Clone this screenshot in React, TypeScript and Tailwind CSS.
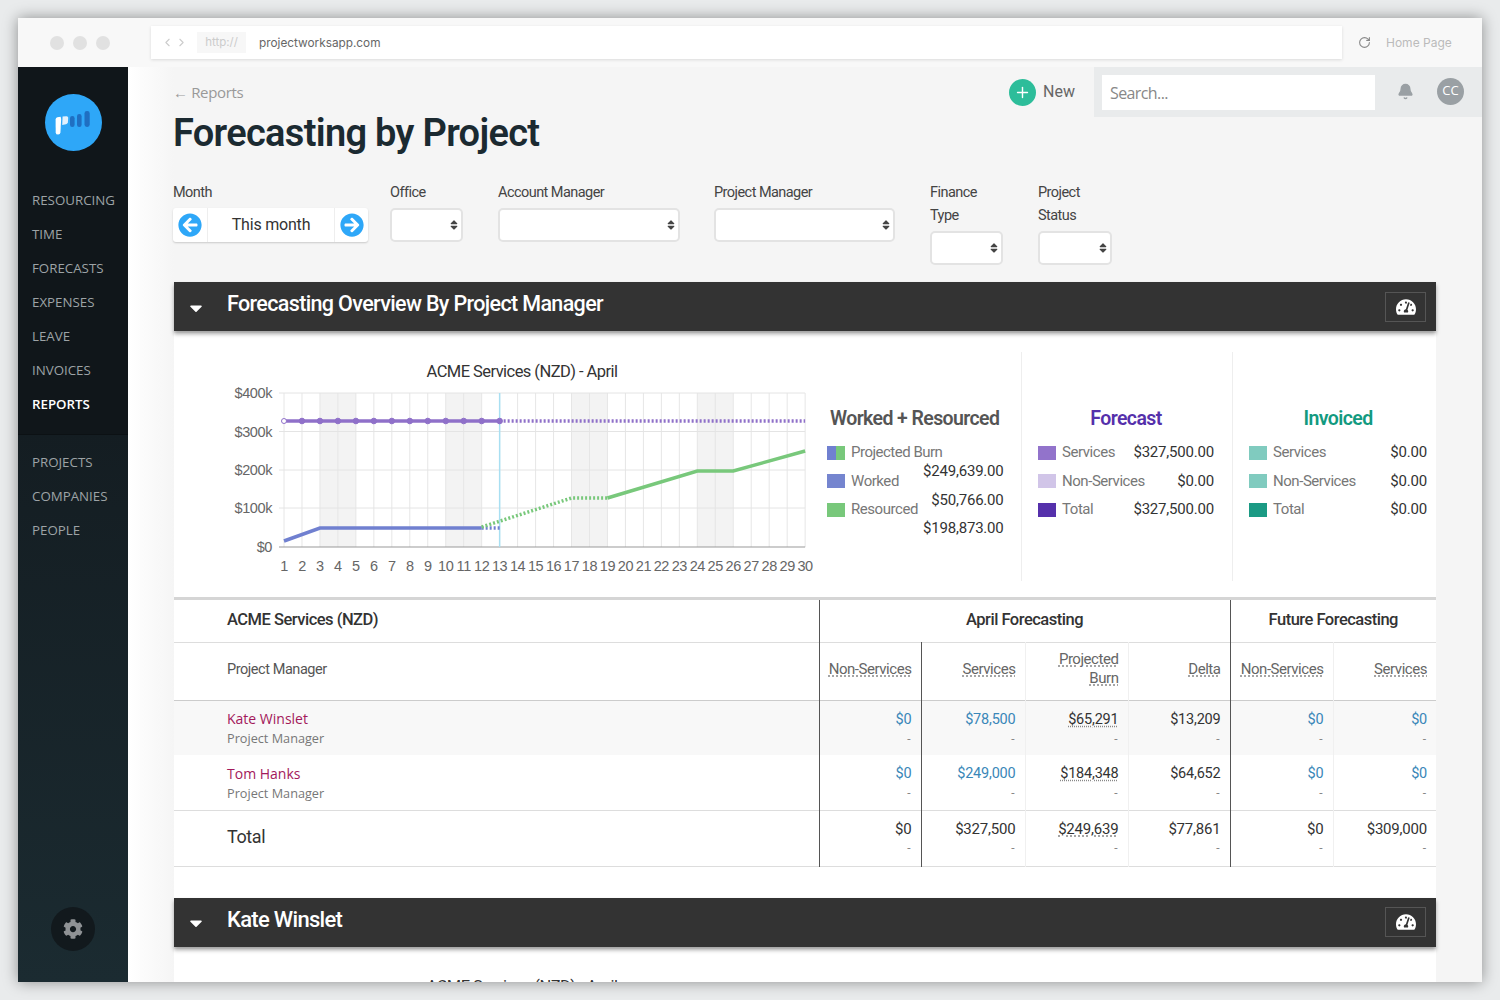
import { Bell, ChevronLeft, ChevronRight, Plus, RotateCw } from "lucide-react";
import { FaArrowCircleLeft, FaArrowCircleRight, FaCaretDown, FaCog, FaSort, FaTachometerAlt } from "react-icons/fa";

const mainNav = ["Resourcing", "Time", "Forecasts", "Expenses", "Leave", "Invoices", "Reports"];
const subNav = ["Projects", "Companies", "People"];

const dayX = (d: number) => 110 + (d - 1) * 17.97;
const days = Array.from({ length: 30 }, (_, i) => i + 1);
const grid = [
  { label: "$400k", y: 42 },
  { label: "$300k", y: 80.5 },
  { label: "$200k", y: 119 },
  { label: "$100k", y: 157 },
  { label: "$0", y: 196 },
];
const pts = (list: [number, number][]) => list.map(([d, y]) => `${dayX(d)},${y}`).join(" ");

const Chart = () => (
  <svg width="660" height="230" viewBox="0 0 660 230" className="shrink-0 block">
    <text x="348" y="26" textAnchor="middle" fontSize="16.5" fill="#333333" fontFamily="Roboto, sans-serif" letterSpacing="-0.55">
      ACME Services (NZD) - April
    </text>
    {[3, 10, 17, 24].map((d) => (
      <rect key={d} x={dayX(d)} y="42" width={dayX(5) - dayX(3)} height="154" fill="#f3f3f3" />
    ))}
    {days.map((d) => (
      <line key={d} x1={dayX(d)} x2={dayX(d)} y1="42" y2="196" stroke="#e6e6e6" />
    ))}
    {grid.map((g) => (
      <g key={g.label}>
        <line x1="105" x2={dayX(30)} y1={g.y} y2={g.y} stroke={g.y === 196 ? "#999999" : "#e4e4e4"} />
        <text x="98" y={g.y + 5} textAnchor="end" fontSize="14.5" fill="#666666" fontFamily="Liberation Sans, sans-serif" letterSpacing="-0.4">
          {g.label}
        </text>
      </g>
    ))}
    {days.map((d) => (
      <text key={d} x={dayX(d)} y="220" textAnchor="middle" fontSize="14.5" fill="#666666" fontFamily="Liberation Sans, sans-serif" letterSpacing="-0.4">
        {d}
      </text>
    ))}
    <line x1={dayX(13)} x2={dayX(13)} y1="42" y2="196" stroke="#a8dff2" strokeWidth="1.5" />
    <polyline points={pts([[1, 70], [13, 70]])} fill="none" stroke="#8f70c9" strokeWidth="3.5" />
    {days.slice(0, 13).map((d) => (
      <circle key={d} cx={dayX(d)} cy="70" r={d === 1 ? 2.5 : 2.8} fill={d === 1 ? "#ffffff" : "#8f70c9"} stroke="#8f70c9" strokeWidth="1" />
    ))}
    <polyline points={pts([[13, 70], [30, 70]])} fill="none" stroke="#8f70c9" strokeWidth="3.5" strokeDasharray="2 2" />
    <polyline points={pts([[1, 190], [3, 177], [12, 177]])} fill="none" stroke="#7080d0" strokeWidth="3.5" />
    <polyline points={pts([[12, 177], [13, 177]])} fill="none" stroke="#7080d0" strokeWidth="3.5" strokeDasharray="2 2" />
    <polyline points={pts([[12, 176], [17, 147], [19, 147]])} fill="none" stroke="#78c87b" strokeWidth="3.5" strokeDasharray="2 2" />
    <polyline points={pts([[19, 147], [24, 120], [26, 120], [30, 100]])} fill="none" stroke="#78c87b" strokeWidth="3.5" />
  </svg>
);

const Select = ({ width }: { width: string }) => (
  <div className={`${width} h-[34px] bg-white border-2 border-[#e3e3e3] rounded-[5px] flex items-center justify-end pr-[1px]`}>
    <FaSort size={12} className="text-[#444]" />
  </div>
);

const Filter = ({ label, width, select }: { label: string; width: string; select: string }) => (
  <div className={`${width} shrink-0`}>
    <div className={`${select} text-[14.5px] leading-[23px] text-[#444] tracking-[-0.55px] mb-[4px]`}>{label}</div>
    <Select width={select} />
  </div>
);

const SectionBar = ({ title, size }: { title: string; size: string }) => (
  <div className="h-[49px] bg-[#333333] flex items-center shadow-[0_3px_4px_rgba(0,0,0,0.35)] relative">
    <FaCaretDown size={20} className="text-white ml-[12px] mr-[21px] mt-[2px]" />
    <span className={`${size} text-white font-medium -mt-[5px]`}>{title}</span>
    <div className="ml-auto mr-[10px] w-[41px] h-[30px] border border-[#555] flex items-center justify-center">
      <FaTachometerAlt size={20} className="text-white" />
    </div>
  </div>
);

const LegendSwatch = ({ color }: { color: string }) => <span className="w-[18px] h-[14px] shrink-0 mt-[1px]" style={{ background: color }} />;

const LegendRow = ({ color, label, value }: { color: string; label: string; value: string }) => (
  <div className="h-[28.5px] flex items-center">
    <LegendSwatch color={color} />
    <span className="ml-[6px] text-[15px] text-[#777] tracking-[-0.45px]">{label}</span>
    <span className="ml-auto text-[15px] text-[#333] tracking-[-0.2px]">{value}</span>
  </div>
);

const Num = ({ value, blue, dotted, size = "text-[15px]" }: { value: string; blue?: boolean; dotted?: boolean; size?: string }) => (
  <div className="text-right">
    <div className={`${size} leading-[20px] tracking-[-0.2px] ${blue ? "text-[#3a87b8]" : "text-[#333]"} ${dotted ? "underline decoration-dotted decoration-[#888] underline-offset-2" : ""}`}>
      {value}
    </div>
    <div className="text-[12px] leading-[18px] text-[#888] pr-[1px]">-</div>
  </div>
);

const people = [
  { name: "Kate Winslet", cells: ["$0", "$78,500", "$65,291", "$13,209", "$0", "$0"], bg: "bg-[#f8f8f8]", h: "h-[55px]" },
  { name: "Tom Hanks", cells: ["$0", "$249,000", "$184,348", "$64,652", "$0", "$0"], bg: "bg-white", h: "h-[55px]" },
];
const totals = ["$0", "$327,500", "$249,639", "$77,861", "$0", "$309,000"];
const headCols = ["Non-Services", "Services", "Projected Burn", "Delta", "Non-Services", "Services"];
// border on each cell's left: dark where a block starts
const cellBorder = ["border-l border-l-[#555]", "border-l border-l-[#555]", "border-l border-l-[#f0f0f0]", "border-l border-l-[#f0f0f0]", "border-l border-l-[#555]", "border-l border-l-[#f0f0f0]"];

const ForecastTable = () => (
  <table className="w-full table-fixed border-collapse bg-white">
    <colgroup>
      <col className="w-[645px]" />
      <col className="w-[102px]" />
      <col className="w-[104px]" />
      <col className="w-[103px]" />
      <col className="w-[102px]" />
      <col className="w-[103px]" />
      <col className="w-[103px]" />
    </colgroup>
    <thead>
      <tr className="h-[42px] border-b border-[#ddd]">
        <th className="text-left pl-[53px] text-[16.5px] font-medium text-[#333] tracking-[-0.5px]">ACME Services (NZD)</th>
        <th colSpan={4} className="border-l border-l-[#555] text-[16.5px] font-medium text-[#333] tracking-[-0.5px]">April Forecasting</th>
        <th colSpan={2} className="border-l border-l-[#555] text-[16.5px] font-medium text-[#333] tracking-[-0.5px]">Future Forecasting</th>
      </tr>
      <tr className="h-[58px] border-b border-[#ccc]">
        <th className="text-left pl-[53px] pb-[2px] text-[14.5px] font-normal text-[#555] tracking-[-0.45px]">Project Manager</th>
        {headCols.map((c, i) => (
          <th key={i} className={`${cellBorder[i]} text-right pr-[9px] pl-[6px] pb-[4px] text-[15px] leading-[19px] font-normal text-[#666] tracking-[-0.45px]`}>
            <span className="underline decoration-dotted decoration-[#888] underline-offset-2">{c}</span>
          </th>
        ))}
      </tr>
    </thead>
    <tbody>
      {people.map((p) => (
        <tr key={p.name} className={`${p.h} ${p.bg}`}>
          <td className="pl-[53px] pt-[1px]">
            <div className="font-['Open_Sans',sans-serif] text-[14px] leading-[20px] text-[#a3195b]">{p.name}</div>
            <div className="font-['Open_Sans',sans-serif] text-[12.7px] leading-[18px] text-[#777]">Project Manager</div>
          </td>
          {p.cells.map((v, i) => (
            <td key={i} className={`${cellBorder[i]} pr-[9px] pt-[2px]`}>
              <Num value={v} blue={i < 2 || i > 3} dotted={i === 2} size="text-[14.5px]" />
            </td>
          ))}
        </tr>
      ))}
      <tr className="h-[56px] border-y border-[#ddd]">
        <td className="pl-[53px] pb-[4px] text-[18px] text-[#333] tracking-[-0.4px]">Total</td>
        {totals.map((v, i) => (
          <td key={i} className={`${cellBorder[i]} pr-[9px]`}>
            <Num value={v} dotted={i === 2} />
          </td>
        ))}
      </tr>
    </tbody>
  </table>
);

const App = () => {
  return (
    <div className="w-[1500px] h-[1000px] p-[18px] bg-[#e9ebec] overflow-hidden font-['Roboto',sans-serif]">
      <div className="h-[964px] flex flex-col overflow-hidden shadow-[0_0_14px_rgba(0,0,0,0.4)]">
        {/* browser chrome */}
        <div className="h-[49px] shrink-0 bg-[#f8f8f8] flex items-center font-['Inter',sans-serif]">
          <div className="w-[133px] pl-[32px] flex gap-[9px]">
            <span className="w-[14px] h-[14px] rounded-full bg-[#e1e1e1]" />
            <span className="w-[14px] h-[14px] rounded-full bg-[#e1e1e1]" />
            <span className="w-[14px] h-[14px] rounded-full bg-[#e1e1e1]" />
          </div>
          <div className="w-[1191px] h-[33px] bg-white shadow-[0_1px_3px_rgba(0,0,0,0.12)] flex items-center pl-[10px]">
            <ChevronLeft size={13} className="text-[#ccc]" />
            <ChevronRight size={13} className="text-[#ccc] ml-[1px]" />
            <span className="ml-[9px] h-[21px] w-[49px] bg-[#f7f7f7] text-[#ccc] text-[11.5px] flex items-center justify-center">http://</span>
            <span className="ml-[13px] text-[11.8px] text-[#666] mt-[2px]">projectworksapp.com</span>
          </div>
          <RotateCw size={13} className="ml-[16px] text-[#888]" />
          <span className="ml-[15px] text-[12px] text-[#bbb]">Home Page</span>
        </div>

        <div className="flex-1 flex min-h-0">
          {/* sidebar */}
          <aside className="w-[110px] shrink-0 flex flex-col bg-[linear-gradient(180deg,#10161a_0%,#141d22_40%,#1b2b31_100%)] font-['Open_Sans',sans-serif]">
            <div className="h-[368px] shrink-0 border-b border-[#0c1114] bg-[#10161a]">
              <div className="mt-[27px] ml-[26.5px] w-[57px] h-[57px] rounded-full bg-[#2ea7f8] flex items-center justify-center">
                <svg width="36" height="24" viewBox="0 0 36 24" className="mt-[1px]">
                  <path d="M0.6 8.4 Q0.7 6.6 2.4 6.3 L5.6 5.8 L6.2 8 L5.4 21.6 Q5.2 23.6 3.2 23.6 Q0.8 23.6 0.7 21.4 Z" fill="#ffffff" />
                  <path d="M7.6 5.6 L11.4 5.2 Q13.2 5.1 13.2 6.8 L12.9 11.2 Q12.6 12.8 11 13.2 L7.2 14 Z" fill="#e2f1fd" />
                  <rect x="15" y="5" width="4.6" height="11" rx="2.2" fill="#1f6fc2" />
                  <rect x="22" y="3" width="4.6" height="13" rx="2.2" fill="#1f6fc2" />
                  <rect x="29.5" y="0" width="5.2" height="16" rx="2.4" fill="#1f6fc2" />
                </svg>
              </div>
              <nav className="mt-[33px] pl-[14px]">
                {mainNav.map((n) => (
                  <div key={n} className={`h-[34px] flex items-center text-[13.3px] uppercase ${n === "Reports" ? "text-white font-semibold" : "text-[#9da3a6]"}`}>
                    {n}
                  </div>
                ))}
              </nav>
            </div>
            <nav className="mt-[11px] pl-[14px]">
              {subNav.map((n) => (
                <div key={n} className="h-[34px] flex items-center text-[13.3px] uppercase text-[#9da3a6]">
                  {n}
                </div>
              ))}
            </nav>
            <div className="mt-auto mb-[31px] ml-[33px] w-[44px] h-[44px] rounded-full bg-[#12191d] flex items-center justify-center">
              <FaCog size={20} className="text-[#8f9295]" />
            </div>
          </aside>

          {/* main */}
          <main className="flex-1 min-w-0 overflow-hidden bg-[linear-gradient(90deg,#ffffff_0,#f5f5f5_46px)]">
            <div className="flex items-start justify-between h-[114px]">
              <div className="pl-[45px] pt-[15px]">
                <div className="text-[15px] leading-[20px] text-[#999] font-['Open_Sans',sans-serif] tracking-[-0.35px]">← Reports</div>
                <h1 className="mt-[8px] text-[38px] leading-[46px] font-semibold text-[#1b2a31] tracking-[-0.7px]">Forecasting by Project</h1>
              </div>
              <div className="flex items-start">
                <div className="flex items-center h-[50px] pr-[19px]">
                  <span className="w-[27px] h-[27px] rounded-full bg-[#2dbd9a] flex items-center justify-center">
                    <Plus size={17} className="text-white" />
                  </span>
                  <span className="ml-[7px] text-[16px] text-[#666]">New</span>
                </div>
                <div className="w-[388px] h-[50px] bg-[#e9ebec] flex items-center pl-[8px]">
                  <div className="w-[273px] h-[35px] bg-white flex items-center pl-[8px] pt-[2px] text-[16px] text-[#888] font-['Open_Sans',sans-serif] tracking-[-0.6px]">Search...</div>
                  <Bell size={17} fill="#9aa0a4" className="ml-[22px] text-[#9aa0a4] -mt-[2px]" />
                  <span className="ml-[23px] w-[27px] h-[27px] rounded-full bg-[#9aa0a4] text-white text-[13px] flex items-center justify-center font-['Open_Sans',sans-serif] -mt-[2px]">CC</span>
                </div>
              </div>
            </div>

            <div className="px-[46px]">
              {/* filters */}
              <div className="flex items-start -ml-[1px] h-[101px]">
                <div className="w-[217px] shrink-0">
                  <div className="text-[14.5px] leading-[23px] text-[#444] tracking-[-0.55px] mb-[4px]">Month</div>
                  <div className="w-[195px] h-[34px] bg-white rounded-[3px] shadow-[0_1px_2px_rgba(0,0,0,0.18)] flex items-center">
                    <div className="w-[35px] h-full flex items-center justify-center border-r border-[#eee]">
                      <FaArrowCircleLeft size={24} className="text-[#2ea7f8]" />
                    </div>
                    <div className="flex-1 text-center text-[16px] text-[#333] tracking-[-0.2px]">This month</div>
                    <div className="w-[34px] h-full flex items-center justify-center border-l border-[#eee]">
                      <FaArrowCircleRight size={24} className="text-[#2ea7f8]" />
                    </div>
                  </div>
                </div>
                <Filter label="Office" width="w-[108px]" select="w-[73px]" />
                <Filter label="Account Manager" width="w-[216px]" select="w-[182px]" />
                <Filter label="Project Manager" width="w-[216px]" select="w-[181px]" />
                <Filter label="Finance Type" width="w-[108px]" select="w-[73px]" />
                <Filter label="Project Status" width="w-[74px]" select="w-[74px]" />
              </div>

              <SectionBar title="Forecasting Overview By Project Manager" size="text-[21.5px] tracking-[-0.64px]" />

              {/* overview */}
              <div className="mt-[2px] bg-white h-[264px] flex pt-[19px]">
                <div className="w-[847px] flex shrink-0">
                  <div className="w-[656px] shrink-0 -mt-[1px]">
                    <Chart />
                  </div>
                  <div className="pt-[54px] w-[173px] shrink-0">
                    <div className="text-[19.5px] leading-[26px] font-semibold text-[#555] tracking-[-0.6px] whitespace-nowrap">Worked + Resourced</div>
                    <div className="flex mt-[6px]">
                      <div className="w-[96px] shrink-0 -ml-[3px] relative z-10">
                        <div className="h-[28.5px] flex items-center">
                          <span className="w-[18px] h-[14px] mt-[1px] shrink-0 bg-[linear-gradient(90deg,#7080d0_50%,#78c87b_50%)]" />
                          <span className="ml-[6px] text-[15px] text-[#777] tracking-[-0.5px] whitespace-nowrap">Projected Burn</span>
                        </div>
                        <div className="h-[28.5px] flex items-center">
                          <LegendSwatch color="#7585cf" />
                          <span className="ml-[6px] text-[15px] text-[#777] tracking-[-0.45px]">Worked</span>
                        </div>
                        <div className="h-[28.5px] flex items-center">
                          <LegendSwatch color="#78c87b" />
                          <span className="ml-[6px] text-[15px] text-[#777] tracking-[-0.45px]">Resourced</span>
                        </div>
                      </div>
                      <div className="pt-[19px] flex-1 text-right text-[15px] text-[#333] tracking-[-0.2px] whitespace-nowrap">
                        <div className="h-[28.5px] leading-[28.5px]">$249,639.00</div>
                        <div className="h-[28.5px] leading-[28.5px]">$50,766.00</div>
                        <div className="h-[28.5px] leading-[28.5px]">$198,873.00</div>
                      </div>
                    </div>
                  </div>
                </div>
                <div className="w-[211px] h-[229px] shrink-0 border-l border-[#eeeeee] pl-[16px] pr-[18px] pt-[54px]">
                  <div className="text-center text-[19.5px] leading-[26px] font-semibold text-[#5530ab] tracking-[-0.6px]">Forecast</div>
                  <div className="mt-[6px]">
                    <LegendRow color="#9273cb" label="Services" value="$327,500.00" />
                    <LegendRow color="#d1c5e8" label="Non-Services" value="$0.00" />
                    <LegendRow color="#5530ab" label="Total" value="$327,500.00" />
                  </div>
                </div>
                <div className="flex-1 h-[229px] border-l border-[#eeeeee] pl-[16px] pr-[9px] pt-[54px]">
                  <div className="text-center text-[19.5px] leading-[26px] font-semibold text-[#129a80] tracking-[-0.6px]">Invoiced</div>
                  <div className="mt-[6px]">
                    <LegendRow color="#80cbbf" label="Services" value="$0.00" />
                    <LegendRow color="#80cbbf" label="Non-Services" value="$0.00" />
                    <LegendRow color="#1b9a84" label="Total" value="$0.00" />
                  </div>
                </div>
              </div>

              <div className="h-[3px] bg-[#d5d5d5]" />
              <ForecastTable />
              <div className="h-[31px] bg-white" />

              <SectionBar title="Kate Winslet" size="text-[22px] tracking-[-0.7px]" />
              <div className="mt-[2px] bg-white h-[60px] pt-[26px]">
                <div className="w-[696px] text-center text-[16.5px] leading-[24px] text-[#333] tracking-[-0.55px]">ACME Services (NZD) - April</div>
              </div>
            </div>
          </main>
        </div>
      </div>
    </div>
  );
};

export default App;
